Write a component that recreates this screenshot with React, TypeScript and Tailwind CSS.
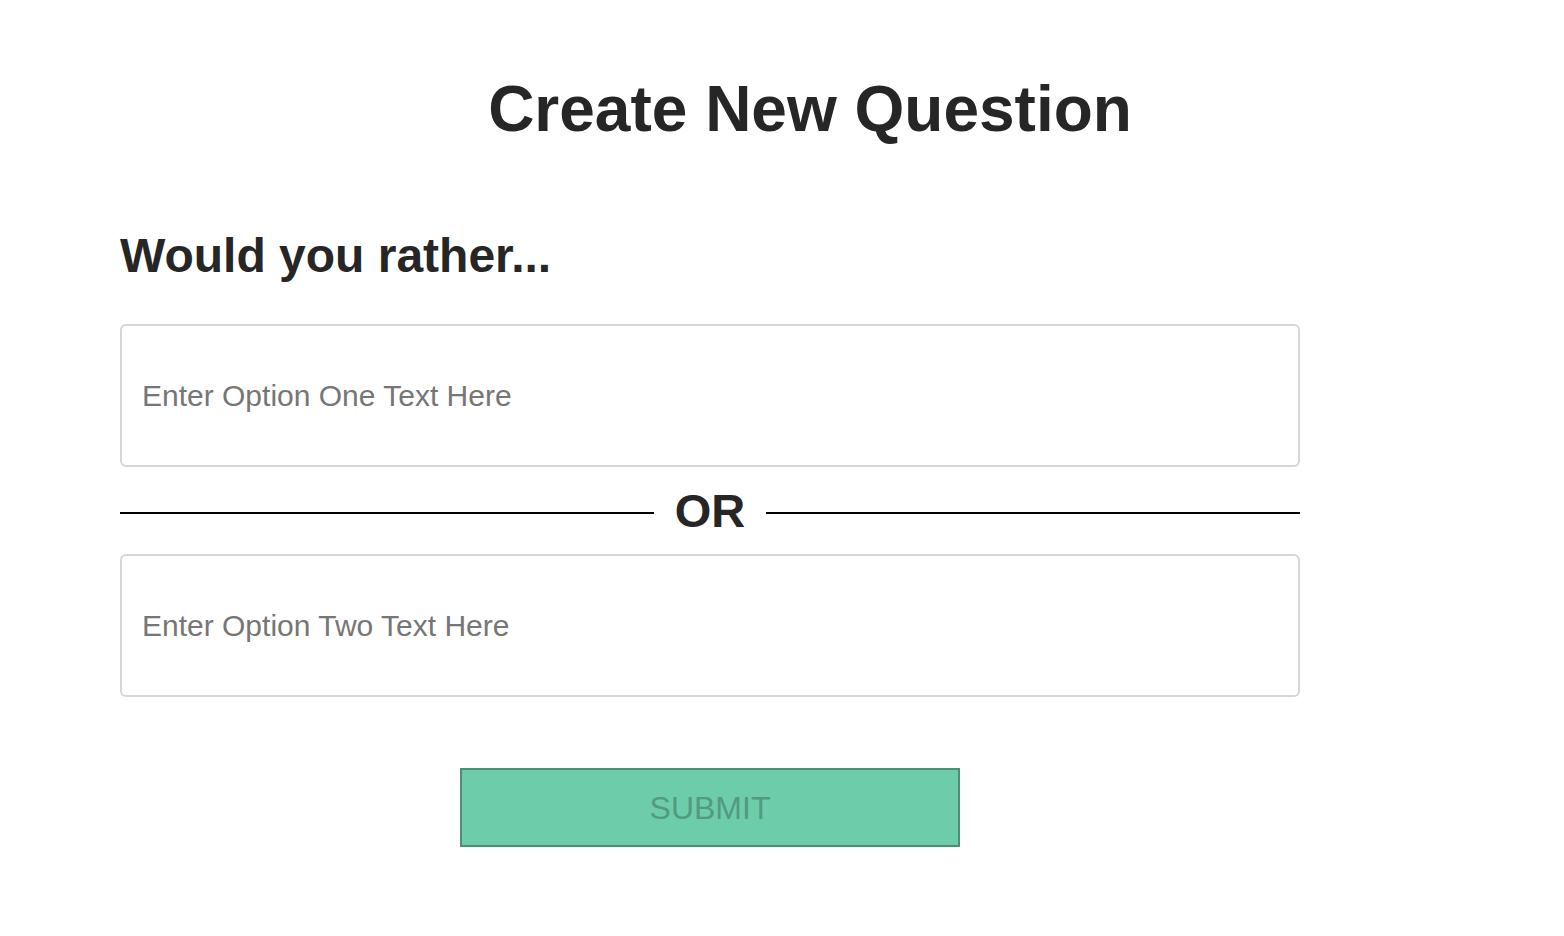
import React, { useState } from "react";

const NewQuestion = () => {
  const [optionOne, setOptionOne] = useState("");
  const [optionTwo, setOptionTwo] = useState("");

  const onSubmit = (e: React.FormEvent) => {
    e.preventDefault();
  };

  return (
    <div className="min-h-screen bg-white pl-[120px] pr-[64px] font-['Liberation_Sans',Arial,sans-serif] text-[#262626]">
      <h1 className="pt-[77px] text-center text-[64px] font-bold leading-none">
        Create New Question
      </h1>
      <form onSubmit={onSubmit} className="mt-[91px] w-[1180px]">
        <p className="text-[48px] font-bold leading-none">Would you rather...</p>
        <input
          type="text"
          value={optionOne}
          onChange={(e) => setOptionOne(e.target.value)}
          placeholder="Enter Option One Text Here"
          className="mt-[44px] block h-[143px] w-full rounded-md border-2 border-[#d6d6d6] px-5 text-[30px] text-[#262626] outline-none placeholder:text-[#767676]"
        />
        <div className="flex h-[87px] items-center gap-[21px]">
          <div className="mt-[4px] h-[2px] flex-1 bg-black" />
          <span className="text-[47px] font-bold leading-none">OR</span>
          <div className="mt-[4px] h-[2px] flex-1 bg-black" />
        </div>
        <input
          type="text"
          value={optionTwo}
          onChange={(e) => setOptionTwo(e.target.value)}
          placeholder="Enter Option Two Text Here"
          className="block h-[143px] w-full rounded-md border-2 border-[#d6d6d6] px-5 text-[30px] text-[#262626] outline-none placeholder:text-[#767676]"
        />
        <div className="mt-[71px] flex justify-center">
          <button
            type="submit"
            className="h-[79px] w-[500px] border-2 border-[#4b8f78] bg-[#6dcdab] text-[32px] uppercase text-[#529a80]"
          >
            Submit
          </button>
        </div>
      </form>
    </div>
  );
};

export default NewQuestion;
